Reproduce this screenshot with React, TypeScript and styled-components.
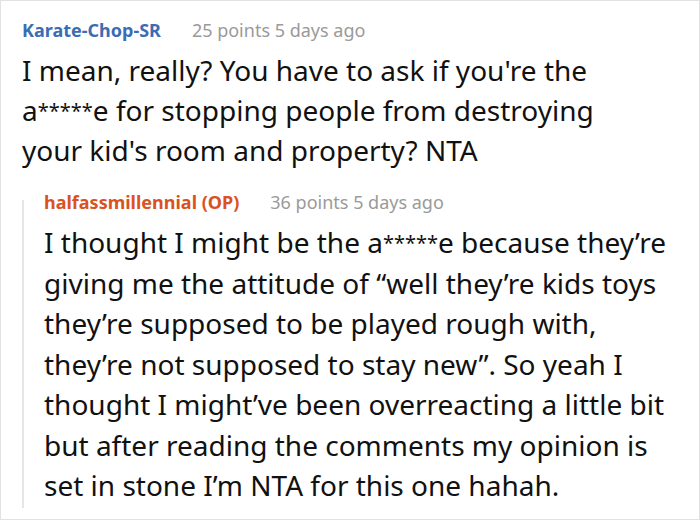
import React from "react";
import styled, { createGlobalStyle } from "styled-components";

type CommentData = {
  author: string;
  points: number;
  age: string;
  body: string;
  isOp?: boolean;
};

const GlobalStyle = createGlobalStyle`
  body {
    margin: 0;
    background: #fff;
  }
`;

const parent: CommentData = {
  author: "Karate-Chop-SR",
  points: 25,
  age: "5 days ago",
  body: "I mean, really? You have to ask if you're the a*****e for stopping people from destroying your kid's room and property? NTA",
};

const reply: CommentData = {
  author: "halfassmillennial (OP)",
  points: 36,
  age: "5 days ago",
  isOp: true,
  body: "I thought I might be the a*****e because they’re giving me the attitude of “well they’re kids toys they’re supposed to be played rough with, they’re not supposed to stay new”. So yeah I thought I might’ve been overreacting a little bit but after reading the comments my opinion is set in stone I’m NTA for this one hahah.",
};

// the censored word gets its smaller, raised asterisks
const renderBody = (text: string) =>
  text.split(/(\*+)/).map((part, i) =>
    part.startsWith("*") ? <Stars key={i}>{part}</Stars> : part
  );

const Comment: React.FC<{ data: CommentData }> = ({ data }) => (
  <>
    <Header>
      <Author $op={data.isOp}>{data.author}</Author>
      <Meta>
        {data.points} points {data.age}
      </Meta>
    </Header>
    <Body>{renderBody(data.body)}</Body>
  </>
);

export default function App() {
  return (
    <>
      <GlobalStyle />
      <Frame>
        <Comment data={parent} />
        <Reply>
          <Comment data={reply} />
        </Reply>
      </Frame>
    </>
  );
}

const Frame = styled.div`
  width: 700px;
  height: 520px;
  box-sizing: border-box;
  border: 1px solid #e2e2e2;
  padding: 17px 12px 0 21px;
  overflow: hidden;
  font-family: "Noto Sans", "Open Sans", sans-serif;
  color: #111;
`;

const Header = styled.div`
  display: flex;
  align-items: baseline;
  gap: 31px;
  line-height: 24px;
  font-size: 18px;
  margin-bottom: 8px;
`;

const Author = styled.span<{ $op?: boolean }>`
  font-weight: 700;
  color: ${(p) => (p.$op ? "#d9521f" : "#3b6cb4")};
`;

const Meta = styled.span`
  color: #9a9a9a;
`;

const Body = styled.div`
  font-size: 28px;
  line-height: 40px;
  max-width: 600px;
`;

const Stars = styled.span`
  font-size: 20px;
  line-height: 1;
  vertical-align: 3px;
`;

const Reply = styled.div`
  position: relative;
  margin-top: 20px;
  padding-left: 22px;

  ::before {
    content: "";
    position: absolute;
    left: 0;
    top: 10px;
    bottom: -2px;
    width: 2px;
    background: #e6e6e6;
  }

  ${Body} {
    line-height: 40.5px;
    max-width: none;
  }
`;
